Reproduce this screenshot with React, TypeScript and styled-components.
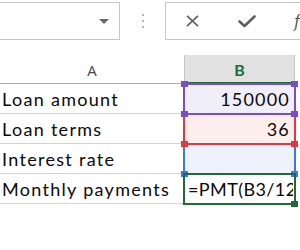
import React from "react";
import styled, { createGlobalStyle } from "styled-components";

const GlobalStyle = createGlobalStyle`
  html, body { margin: 0; padding: 0; background: #ffffff; }
  body { font-family: "Lato", "Liberation Sans", sans-serif; }
`;

const Frame = styled.div`
  width: 300px;
  height: 250px;
  overflow: hidden;
  background: #ffffff;
  display: flex;
  flex-direction: column;
`;

const Toolbar = styled.div`
  display: flex;
  align-items: flex-start;
  padding-top: 2px;
  height: 38px;
  flex-shrink: 0;
`;

const NameBox = styled.div`
  box-sizing: border-box;
  width: 130px;
  margin-left: -10px;
  height: 38px;
  border: 1px solid #c6c6c6;
  display: flex;
  align-items: center;
  justify-content: flex-end;
  padding-right: 10px;
  flex-shrink: 0;
`;

const Caret = styled.span`
  width: 0;
  height: 0;
  border-left: 5px solid transparent;
  border-right: 5px solid transparent;
  border-top: 5px solid #6a6a6a;
  margin-top: 1px;
`;

const Dots = styled.div`
  width: 45px;
  display: flex;
  flex-direction: column;
  align-items: center;
  justify-content: center;
  gap: 4px;
  height: 38px;
  flex-shrink: 0;
`;

const Dot = styled.span`
  width: 2px;
  height: 2px;
  background: #9a9a9a;
  border-radius: 1px;
`;

const FormulaBox = styled.div`
  box-sizing: border-box;
  width: 160px;
  height: 38px;
  border: 1px solid #c6c6c6;
  display: flex;
  align-items: center;
  padding-left: 19px;
  flex-shrink: 0;
`;

const IconSlot = styled.span<{ $w: number; $gap: number }>`
  display: inline-flex;
  width: ${(p) => p.$w}px;
  margin-right: ${(p) => p.$gap}px;
  justify-content: center;
`;

const Fx = styled.span`
  font-family: "DejaVu Serif", "Liberation Serif", serif;
  font-style: italic;
  font-size: 16px;
  color: #555;
`;

const Sheet = styled.div`
  margin-top: 15px;
  display: grid;
  grid-template-columns: 184px 111px 1fr;
  grid-auto-rows: 30px;
  grid-template-rows: 29px;
`;

const ColHeader = styled.div<{ $active?: boolean }>`
  box-sizing: border-box;
  display: flex;
  align-items: center;
  justify-content: center;
  font-family: ${(p) => (p.$active ? '"Lato", sans-serif' : '"Open Sans", sans-serif')};
  font-size: ${(p) => (p.$active ? "16px" : "15px")};
  font-weight: ${(p) => (p.$active ? 700 : 400)};
  color: ${(p) => (p.$active ? "#1d6b36" : "#444444")};
  background: ${(p) => (p.$active ? "#e1e1e1" : "#ffffff")};
  border-bottom: ${(p) => (p.$active ? "2px solid #1e6b37" : "1px solid #ababab")};
  border-left: ${(p) => (p.$active ? "1px solid #c4c4c4" : "none")};
  border-right: ${(p) => (p.$active ? "1px solid #c4c4c4" : "none")};
  padding-top: 1px;
`;

const Spacer = styled.div``;

const LabelCell = styled.div`
  box-sizing: border-box;
  border-bottom: 1px solid #d4d4d4;
  display: flex;
  align-items: center;
  padding-left: 2px;
  font-size: 18px;
  color: #0a0a0a;
  white-space: nowrap;
  overflow: visible;
  position: relative;
  z-index: 0;
  letter-spacing: 1.3px;
`;

const ValueCell = styled.div<{ $bg: string; $align: "left" | "right" }>`
  box-sizing: border-box;
  position: relative;
  background: ${(p) => p.$bg};
  display: flex;
  align-items: center;
  justify-content: ${(p) => (p.$align === "right" ? "flex-end" : "flex-start")};
  padding: 0 5px 0 5px;
  font-size: 18px;
  color: #0a0a0a;
  white-space: nowrap;
  letter-spacing: 1.2px;
`;

const Clip = styled.div`
  position: absolute;
  inset: 0 2px 0 0;
  overflow: hidden;
  display: flex;
  align-items: center;
  padding-left: 4px;
  letter-spacing: 0.4px;
`;

const RefBox = styled.div<{ $color: string; $z: number; $w: number }>`
  position: absolute;
  left: -1px;
  right: -1px;
  top: -1px;
  bottom: -1px;
  border: ${(p) => p.$w}px solid ${(p) => p.$color};
  z-index: ${(p) => p.$z};
  pointer-events: none;
`;

type Corner = "tl" | "tr" | "bl" | "br";

const Handle = styled.span<{ $color: string; $corner: Corner }>`
  position: absolute;
  width: 7px;
  height: 6px;
  background: ${(p) => p.$color};
  z-index: 10;
  ${(p) => (p.$corner[0] === "t" ? "top: -4px;" : "bottom: -4px;")}
  ${(p) => (p.$corner[1] === "l" ? "left: -4px;" : "right: -4px;")}
`;

const rows = [
  { label: "Loan amount", value: "150000", bg: "#f0eef9", color: "#7a4cc6", z: 3 },
  { label: "Loan terms", value: "36", bg: "#fdeeee", color: "#e0393e", z: 2 },
  { label: "Interest rate", value: "", bg: "#edf2fc", color: "#3c7ae0", z: 1 },
];

const XIcon = () => (
  <svg width="15" height="12" viewBox="0 0 15 12">
    <path d="M2 0.8 L13 11.2 M13 0.8 L2 11.2" stroke="#5f5f5f" strokeWidth="1.6" fill="none" />
  </svg>
);

const CheckIcon = () => (
  <svg width="20" height="13" viewBox="0 0 20 13">
    <path d="M1.5 6.5 L6.5 11 L16.5 1.5" stroke="#5f5f5f" strokeWidth="2.6" fill="none" strokeLinejoin="round" strokeLinecap="round" />
  </svg>
);

export default function App() {
  return (
    <>
      <GlobalStyle />
      <Frame>
        <Toolbar>
          <NameBox>
            <Caret />
          </NameBox>
          <Dots>
            <Dot />
            <Dot />
            <Dot />
          </Dots>
          <FormulaBox>
            <IconSlot $w={15} $gap={38}>
              <XIcon />
            </IconSlot>
            <IconSlot $w={20} $gap={36}>
              <CheckIcon />
            </IconSlot>
            <Fx>fx</Fx>
          </FormulaBox>
        </Toolbar>
        <Sheet>
          <ColHeader>A</ColHeader>
          <ColHeader $active>B</ColHeader>
          <Spacer />
          {rows.map((r) => (
            <React.Fragment key={r.label}>
              <LabelCell>{r.label}</LabelCell>
              <ValueCell $bg={r.bg} $align="right">
                {r.value}
                <RefBox $color={r.color} $z={r.z} $w={2}>
                  <Handle $color={r.color} $corner="tl" />
                  <Handle $color={r.color} $corner="tr" />
                  <Handle $color={r.color} $corner="bl" />
                  <Handle $color={r.color} $corner="br" />
                </RefBox>
              </ValueCell>
              <Spacer />
            </React.Fragment>
          ))}
          <LabelCell>Monthly payments</LabelCell>
          <ValueCell $bg="#ffffff" $align="left">
            <Clip>=PMT(B3/12</Clip>
            <RefBox $color="#1e6b37" $z={4} $w={2}>
              <Handle $color="#1e6b37" $corner="br" />
            </RefBox>
          </ValueCell>
          <Spacer />
        </Sheet>
      </Frame>
    </>
  );
}
